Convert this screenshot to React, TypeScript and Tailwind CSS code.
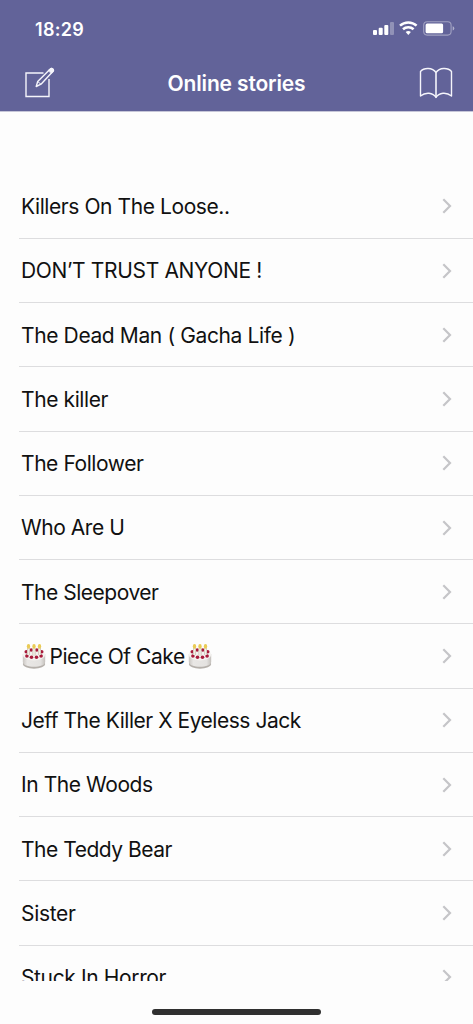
import type { ReactNode } from "react"

const CakeIcon = ({ className = "" }: { className?: string }) => (
    <svg viewBox="0 0 24 25" className={`inline-block w-6 h-[25px] shrink-0 ${className}`}>
        <defs>
            <linearGradient id="cake" x1="0" x2="1">
                <stop offset="0" stopColor="#c9c5c1" />
                <stop offset="0.2" stopColor="#e9e7e5" />
                <stop offset="0.8" stopColor="#e4e2e0" />
                <stop offset="1" stopColor="#c4c0bc" />
            </linearGradient>
        </defs>
        <ellipse cx="12" cy="20" rx="11.200" ry="4.700" fill="#b5b0ab" />
        <path d="M.8 10v8c0 6.300 22.400 6.300 22.400 0V10z" fill="url(#cake)" />
        <ellipse cx="12" cy="10.800" rx="11.200" ry="5.600" fill="#f4f2f0" />
        <g fill="#a81c3c">
            <circle cx="9.200" cy="6" r="1.700" />
            <circle cx="14.800" cy="6" r="1.700" />
            <circle cx="4.300" cy="7.800" r="1.800" />
            <circle cx="19.700" cy="7.800" r="1.800" />
            <circle cx="4.900" cy="12" r="1.800" />
            <circle cx="9.500" cy="13.200" r="1.800" />
            <circle cx="14.500" cy="13.200" r="1.800" />
            <circle cx="19.100" cy="12" r="1.800" />
        </g>
        <path d="M6.500 4v7M12 4v8M17.500 4v7" stroke="#c9beb0" strokeWidth="3" />
        <path d="M6.500 4v7M12 4v8M17.500 4v7" stroke="#f3eee6" strokeWidth="1.600" />
        <g fill="#eacb55">
            <ellipse cx="6.500" cy="2.400" rx="1.700" ry="2.300" />
            <ellipse cx="12" cy="2.400" rx="1.700" ry="2.300" />
            <ellipse cx="17.500" cy="2.400" rx="1.700" ry="2.300" />
        </g>
    </svg>
)

const ComposeIcon = () => (
    <svg viewBox="0 0 32 32" className="w-8 h-8" fill="none" stroke="#f5f5fb" strokeWidth="1.4">
        <path d="M19.500 6H2v23.500h23V12" />
        <path d="M12.200 19.500l1.500-5L26.300 2q1.200-1.200 2.500 0t0 2.500L17 17.200z" strokeLinejoin="round" />
        <path d="M24.500 3.800l2.800 2.800M13.700 14.500l3.200 2.700" strokeWidth="1" />
        <path d="M26.300 2.200q1.200-1.200 2.500 0t0 2.300l-1 1-2.500-2.500z" fill="#f5f5fb" />
    </svg>
)

const BookIcon = () => (
    <svg viewBox="0 0 34 32" className="w-[34px] h-8" fill="none" stroke="#f5f5fb" strokeWidth="1.4" strokeLinejoin="round">
        <path d="M17 5.500C13.500.3 5 .3 1.500 4.500V29c5-4.200 12.500-3.700 15.500 1.500C20 25.300 27.500 24.800 32.500 29V4.500C29 .3 20.500.3 17 5.500z" />
        <path d="M17 5.500v25" strokeWidth="1.600" />
    </svg>
)

const StatusIcons = () => (
    <svg viewBox="0 0 84 18" className="w-[84px] h-[18px]">
        <g fill="#fff">
            <rect x="1" y="10" width="4" height="5" rx="1" />
            <rect x="6.700" y="7.800" width="4" height="7.200" rx="1" />
            <rect x="12.300" y="5" width="4" height="10" rx="1" />
            <rect x="18" y="2" width="4" height="13" rx="1" opacity="0.3" />
            <path d="M33.700 12c1.600-1.300 3.600-1.300 5.200 0l-2.600 2.900z" />
            <rect x="53.600" y="3.600" width="17.500" height="9.600" rx="1.500" />
            <path d="M80.700 6.200q1.600.6 1.600 2.200t-1.600 2.200z" opacity="0.5" />
        </g>
        <path d="M28 5.700c4.700-4.300 11.900-4.300 16.600 0M31 9.300c3-2.700 7.600-2.700 10.600 0" fill="none" stroke="#fff" strokeWidth="2.500" />
        <rect x="51.700" y="1.700" width="27.400" height="13.400" rx="3.500" fill="none" stroke="#fff" strokeOpacity="0.4" strokeWidth="1.100" />
    </svg>
)

const Chevron = () => (
    <svg viewBox="0 0 10 16" className="w-2.5 h-4" fill="none" stroke="#c5c5c8" strokeWidth="2.200">
        <path d="M1.300 1.300L8 8l-6.700 6.700" />
    </svg>
)

const stories: { title: ReactNode; tracking: string }[] = [
    { title: "Killers On The Loose..", tracking: "tracking-[-0.42px]" },
    { title: "DON’T TRUST ANYONE !", tracking: "tracking-[-0.35px]" },
    { title: "The Dead Man ( Gacha Life )", tracking: "tracking-[-0.38px]" },
    { title: "The killer", tracking: "tracking-[-0.4px]" },
    { title: "The Follower", tracking: "tracking-[-0.43px]" },
    { title: "Who Are U", tracking: "tracking-[-0.45px]" },
    { title: "The Sleepover", tracking: "tracking-[-0.48px]" },
    {
        title: <><CakeIcon className="ml-px mr-[3.500px]" />Piece Of Cake<CakeIcon className="ml-[3px]" /></>,
        tracking: "tracking-[-0.45px]",
    },
    { title: "Jeff The Killer X Eyeless Jack", tracking: "tracking-[-0.47px]" },
    { title: "In The Woods", tracking: "tracking-[-0.43px]" },
    { title: "The Teddy Bear", tracking: "tracking-[-0.48px]" },
    { title: "Sister", tracking: "tracking-[-0.3px]" },
    { title: "Stuck In Horror", tracking: "tracking-[-0.37px]" },
]

const Header = () => (
    <header className="h-[112px] shrink-0 bg-[#626399] text-white border-b border-[#c6c6d8]">
        <div className="h-[56px] pt-0.5 pl-[35px] pr-[17px] flex items-center justify-between">
            <span className="text-[18px] font-[580] tracking-[0.3px]">18:29</span>
            <StatusIcons />
        </div>
        <nav className="h-[53px] pl-6 pr-5 flex items-center justify-between">
            <button className="w-[34px]"><ComposeIcon /></button>
            <h1 className="pt-0.5 pr-1 text-[21px] font-[580] tracking-[-0.15px]">Online stories</h1>
            <button className="w-[34px]"><BookIcon /></button>
        </nav>
    </header>
)

const App = () => {
    return (
        <div className="h-screen overflow-hidden flex flex-col bg-[#fdfdfd] font-['Inter','Liberation_Sans',sans-serif]">
            <Header />
            <main className="h-[869px] shrink-0 pt-[62.700px] overflow-hidden">
                <ul>
                    {stories.map(({ title, tracking }, i) => (
                        <li key={i} className="ml-[19px] h-[64.260px] pl-0.5 pr-[21.500px] flex items-center justify-between border-b border-[#dddddf]">
                            <span className={`pt-px flex items-center whitespace-nowrap text-[21px] text-[#111111] ${tracking}`}>{title}</span>
                            <Chevron />
                        </li>
                    ))}
                </ul>
            </main>
            <footer className="flex-1 pt-[27.500px]">
                <div className="mx-auto w-[169px] h-1.5 rounded-full bg-[#303030]" />
            </footer>
        </div>
    )
}

export default App
